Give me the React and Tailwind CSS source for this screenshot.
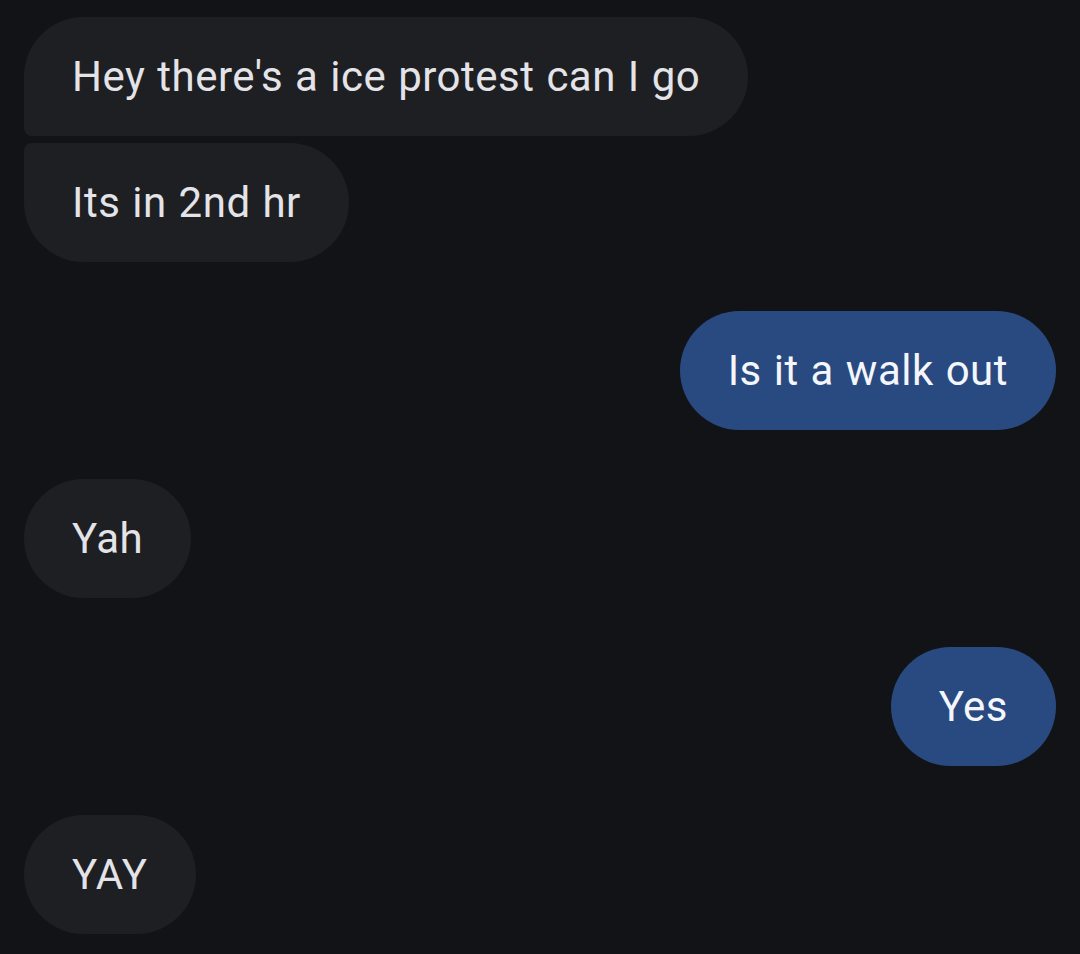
const messages = [
  { id: 1, text: "Hey there's a ice protest can I go", mine: false, shape: 'first' },
  { id: 2, text: 'Its in 2nd hr', mine: false, shape: 'last' },
  { id: 3, text: 'Is it a walk out', mine: true, shape: 'single' },
  { id: 4, text: 'Yah', mine: false, shape: 'single' },
  { id: 5, text: 'Yes', mine: true, shape: 'single' },
  { id: 6, text: 'YAY', mine: false, shape: 'single' },
];

const shapeClass = {
  first: 'rounded-[60px] rounded-bl-[8px]',
  last: 'rounded-[60px] rounded-tl-[8px]',
  single: 'rounded-[60px]',
};

const Bubble = ({ text, mine, shape }) => (
  <div className={`flex ${mine ? 'justify-end' : 'justify-start'}`}>
    <div
      className={`${shapeClass[shape]} ${
        mine ? 'bg-[#294a80] text-[#f4f6fb]' : 'bg-[#1e1f23] text-[#e4e4e8]'
      } h-[119px] px-12 flex items-center text-[42px] leading-none tracking-[0.5px] [word-spacing:1px] whitespace-nowrap`}
    >
      {text}
    </div>
  </div>
);

export default function App() {
  return (
    <div
      className="min-h-screen w-[1080px] h-[954px] overflow-hidden bg-[#121317] px-6 pt-[17px]"
      style={{ fontFamily: 'Roboto, "Noto Sans", sans-serif' }}
    >
      {/* grouped incoming messages */}
      <div className="flex flex-col gap-[7px]">
        <Bubble {...messages[0]} />
        <Bubble {...messages[1]} />
      </div>

      <div className="flex flex-col gap-[49px] mt-[49px]">
        {messages.slice(2).map((m) => (
          <Bubble key={m.id} {...m} />
        ))}
      </div>
    </div>
  );
}
